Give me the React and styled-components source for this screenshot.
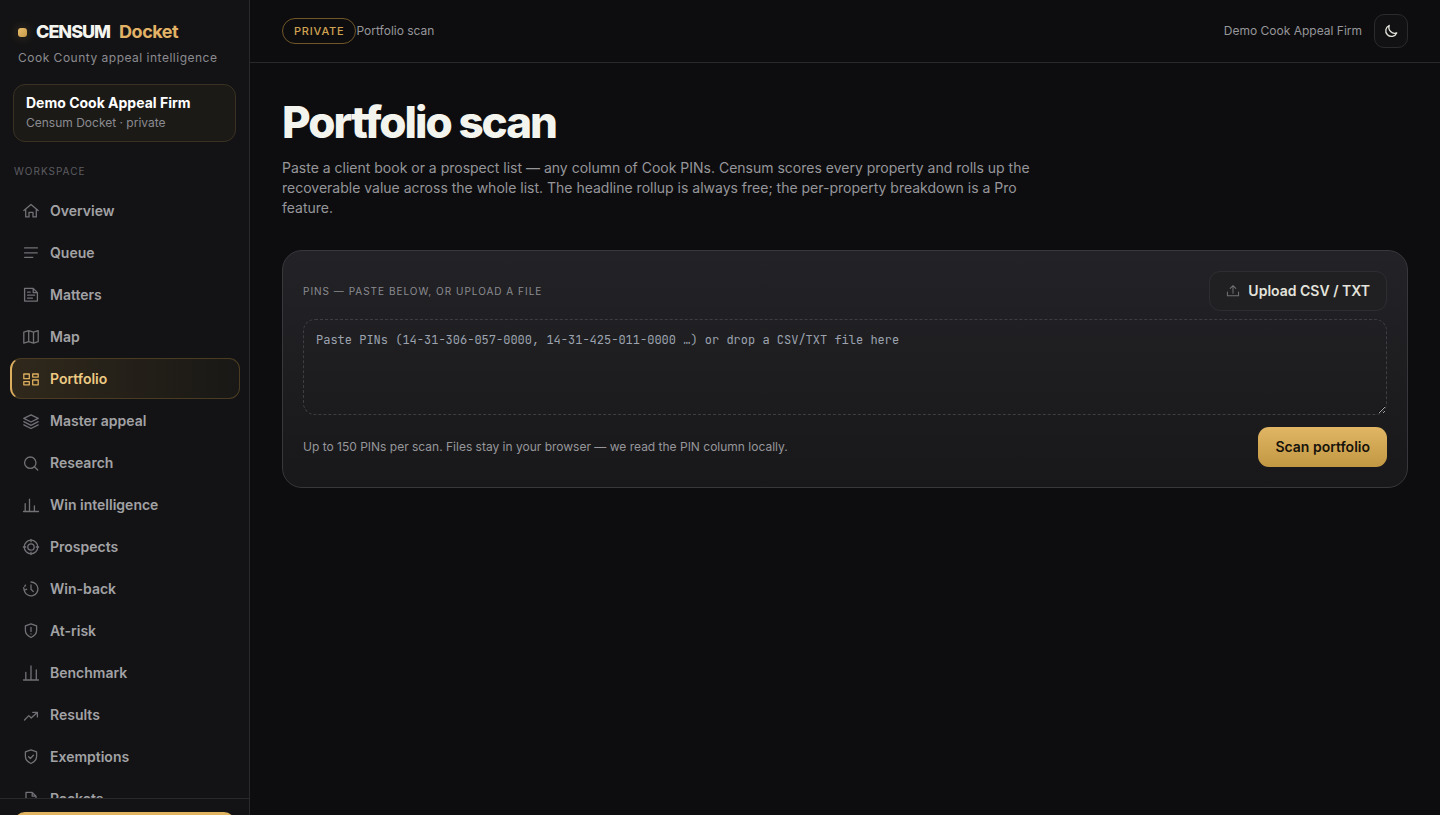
import React from 'react';
import styled, { createGlobalStyle } from 'styled-components';

const GlobalStyle = createGlobalStyle`
    * {
        box-sizing: border-box;
    }

    body {
        margin: 0;
        background: #0d0d0f;
        color: #f4f4ef;
        font-family: Inter, "Liberation Sans", sans-serif;
        font-size: 14px;
        line-height: 20px;
    }

    button, textarea {
        font-family: inherit;
        line-height: inherit;
        margin: 0;
    }
`;

const Shell = styled.div`
    display: grid;
    grid-template-columns: 250px 1fr;
    height: 100vh;
`;

const Sidebar = styled.aside`
    display: flex;
    flex-direction: column;
    min-height: 0;
    overflow: hidden;
    background: #131315;
    border-right: 1px solid #29292c;
`;

const Brand = styled.div`
    display: flex;
    align-items: center;
    padding: 20px 18px 0;
    font-size: 18px;
    line-height: 24px;
    font-weight: 800;
    letter-spacing: -1px;
`;

const BrandMark = styled.span`
    width: 9px;
    height: 9px;
    margin-right: 9px;
    border-radius: 3px;
    background: linear-gradient(135deg, #e8bd6c, #c79a48);
    box-shadow: 0 0 12px rgba(226, 178, 92, 0.3);
`;

const BrandAccent = styled.span`
    margin-left: 9px;
    font-weight: 700;
    letter-spacing: -0.5px;
    color: #e2b266;
`;

const Tagline = styled.div`
    padding: 4px 18px 0;
    font-size: 12px;
    letter-spacing: 0.5px;
    color: #8b8b90;
`;

const FirmCard = styled.div`
    margin: 16px 13px 0;
    padding: 8px 12px;
    border: 1px solid #3a3122;
    border-radius: 12px;
    background: #1b1a17;
`;

const FirmName = styled.div`
    font-weight: 650;
    color: #ffffff;
`;

const FirmMeta = styled.div`
    font-size: 12px;
    color: #8b8b90;
`;

const SectionLabel = styled.div`
    padding: 21px 14px 11px;
    font-size: 10px;
    line-height: 16px;
    letter-spacing: 1px;
    color: #5c5c61;
`;

const Nav = styled.nav`
    display: flex;
    flex: 1 1 0;
    flex-direction: column;
    gap: 1px;
    min-height: 0;
    padding: 0 9px 0 10px;
    overflow: hidden;
`;

const NavLink = styled.a`
    display: flex;
    flex: none;
    align-items: center;
    gap: 10px;
    height: 41px;
    padding: 0 11px;
    border: 1px solid ${({ $active }) => ($active ? '#4a3c22' : 'transparent')};
    border-left: ${({ $active }) => ($active ? '2px solid #dcae5e' : '2px solid transparent')};
    border-radius: 11px;
    background: ${({ $active }) => ($active ? 'linear-gradient(90deg, #30281b, #191816)' : 'none')};
    color: ${({ $active }) => ($active ? '#edca83' : '#a2a2a5')};
    font-weight: 600;
    text-decoration: none;

    svg {
        margin-left: -1px;
        color: ${({ $active }) => ($active ? '#dcae5e' : '#717176')};
    }
`;

const SidebarFooter = styled.div`
    flex: none;
    height: 17px;
    padding: 13px 14px 0;
    border-top: 1px solid #29292c;
    overflow: hidden;
`;

const FooterButton = styled.button`
    display: block;
    width: 100%;
    height: 40px;
    border: 0;
    border-radius: 11px;
    background: linear-gradient(#e2b563, #c79a48);
`;

const Main = styled.main`
    min-width: 0;
`;

const TopBar = styled.header`
    display: flex;
    align-items: center;
    justify-content: space-between;
    height: 63px;
    padding: 0 32px;
    border-bottom: 1px solid #29292c;
    font-size: 12px;
    color: #96969a;
`;

const TopGroup = styled.div`
    display: flex;
    align-items: center;
    gap: ${({ $gap }) => $gap || 0}px;
`;

const Badge = styled.span`
    padding: 0 11px;
    border: 1px solid #705628;
    border-radius: 13px;
    font-size: 11px;
    line-height: 24px;
    font-weight: 500;
    letter-spacing: 0.8px;
    color: #d0a352;
`;

const ThemeButton = styled.button`
    display: flex;
    align-items: center;
    justify-content: center;
    width: 34px;
    height: 34px;
    padding: 0;
    border: 1px solid #2b2b2e;
    border-radius: 10px;
    background: #111113;
    color: #e3e3dc;
`;

const Content = styled.div`
    padding: 32px 32px 0;
`;

const Title = styled.h1`
    margin: 0;
    font-size: 44px;
    line-height: 54px;
    font-weight: 800;
    letter-spacing: -2px;
    color: #f4f4ef;
`;

const Lead = styled.p`
    max-width: 760px;
    margin: 9px 0 32px;
    color: #96969a;
`;

const Panel = styled.section`
    padding: 20px;
    border: 1px solid #38383c;
    border-radius: 20px;
    background: linear-gradient(#232327, #18181a);
`;

const PanelRow = styled.div`
    display: flex;
    align-items: center;
    justify-content: space-between;
`;

const FieldLabel = styled.label`
    font-size: 10px;
    letter-spacing: 1px;
    color: #8b8b90;
`;

const Button = styled.button`
    display: flex;
    align-items: center;
    gap: 8px;
    height: 40px;
    padding: 0 16px;
    border: 1px solid ${({ $primary }) => ($primary ? 'transparent' : '#2e2e32')};
    border-radius: 11px;
    background: ${({ $primary }) => ($primary ? 'linear-gradient(#e0b564, #c39843)' : '#202023')};
    background-origin: border-box;
    color: ${({ $primary }) => ($primary ? '#17130b' : '#e3e3dc')};
    font-size: 14px;
    font-weight: 600;

    svg {
        color: #717176;
    }
`;

const PinsInput = styled.textarea`
    display: block;
    width: 100%;
    height: 96px;
    margin: 8px 0 12px;
    padding: 12px;
    border: 1px dashed #3e3e42;
    border-radius: 12px;
    outline: none;
    background: transparent;
    color: #f4f4ef;
    color-scheme: dark;
    font-family: "JetBrains Mono", "DejaVu Sans Mono", monospace;
    font-size: 12px;
    line-height: 16px;
    resize: vertical;

    &::placeholder {
        color: #9ca3af;
    }
`;

const Hint = styled.span`
    font-size: 12px;
    color: #96969a;
`;

const Icon = ({ size = 18, stroke = 1.3, children }) => (
    <svg
        width={size}
        height={size}
        viewBox="0 0 18 18"
        fill="none"
        stroke="currentColor"
        strokeWidth={stroke}
        strokeLinecap="round"
        strokeLinejoin="round"
        aria-hidden="true"
    >
        {children}
    </svg>
);

const SHIELD = 'M9 1.9 14.6 3.9v4.7c0 3.1-2.1 5.3-5.6 6.9-3.5-1.6-5.6-3.8-5.6-6.9V3.9z';

const items = [
    { name: 'Overview', icon: <path d="M1.9 8.6 9 2.4l7.1 6.2M3.7 7.2v7.7H7v-4.6h4v4.6h3.3V7.2" /> },
    { name: 'Queue', icon: <path d="M2.6 3.9h12.8M2.6 8.9h12.6M2.6 13.3h8.2" /> },
    {
        name: 'Matters',
        icon: <path d="M2.6 2.4h8.6l4.2 4.2v8.5H2.6zM11.2 2.4v4.2h4.2M5.6 6.2h2.6M5.6 9.2h7M5.6 12.2h4.8" />,
    },
    {
        name: 'Map',
        icon: <path d="M1.8 4.2 6.7 2.7l4.8 1.5 4.7-1.5v11l-4.7 1.5-4.8-1.5-4.9 1.5zM6.7 2.7v11M11.5 4.2v11" />,
    },
    {
        name: 'Portfolio',
        icon: <path d="M1.8 4h5.5v4.7H1.8zM10.7 4h5.5v3.1h-5.5zM1.8 11.7h5.5v3.1H1.8zM10.7 10h5.5v4.8h-5.5z" />,
    },
    {
        name: 'Master appeal',
        icon: <path d="M9 2.8 16.2 6.4 9 10 1.8 6.4zM1.8 9.7 9 13.3l7.2-3.6M1.8 12.9 9 16.5l7.2-3.6" />,
    },
    { name: 'Research', icon: <><circle cx="8.3" cy="8.7" r="5.7" /><path d="m12.4 12.8 3.3 3.2" /></> },
    { name: 'Win intelligence', icon: <path d="M1.5 15.5h15M3.2 15.5V7.7M7.5 15.5V3.1M12.4 15.5V9.8" /> },
    {
        name: 'Prospects',
        icon: (
            <>
                <circle cx="9" cy="9" r="6.8" />
                <circle cx="9" cy="9" r="3.2" />
                <path d="M9 1.4v2.4M9 14.2v2.4M1.4 9h2.4M14.2 9h2.4" />
            </>
        ),
    },
    {
        name: 'Win-back',
        icon: <path d="M9 2a6.9 6.9 0 1 1-6.4 9.4M1.7 7.6l.5 2.8 2.5-1.2M2.7 6.4l.8-1.3M9 5v4.2l2.3 2.4" />,
    },
    { name: 'At-risk', icon: <path d={`${SHIELD}M9 5.4v4M9 11.8v.1`} /> },
    { name: 'Benchmark', icon: <path d="M1.5 16h15M3.8 16V8.3M9 16V1.9M14.3 16V6" /> },
    { name: 'Results', icon: <path d="m2.5 14 4.3-4.4L9.2 12l6-5.6M10.8 6.4h4.6v4.5" /> },
    { name: 'Exemptions', icon: <path d={`${SHIELD}M6.6 8.8l1.8 1.7 3-3.3`} /> },
    { name: 'Packets', icon: <path d="M4 2.4h6.2L14 6.2v9.2H4zM10.2 2.4v3.8H14" /> },
];

const SidebarNav = ({ active }) => (
    <Nav aria-label="Workspace">
        {items.map(({ name, icon }) => (
            <NavLink key={name} href="#" $active={name === active}>
                <Icon>{icon}</Icon>
                {name}
            </NavLink>
        ))}
    </Nav>
);

const App = () => {
    return (
        <>
            <GlobalStyle />
            <Shell>
                <Sidebar>
                    <Brand>
                        <BrandMark />
                        CENSUM
                        <BrandAccent>Docket</BrandAccent>
                    </Brand>
                    <Tagline>Cook County appeal intelligence</Tagline>
                    <FirmCard>
                        <FirmName>Demo Cook Appeal Firm</FirmName>
                        <FirmMeta>Censum Docket · private</FirmMeta>
                    </FirmCard>
                    <SectionLabel>WORKSPACE</SectionLabel>
                    <SidebarNav active="Portfolio" />
                    <SidebarFooter>
                        <FooterButton type="button" aria-label="Account" />
                    </SidebarFooter>
                </Sidebar>
                <Main>
                    <TopBar>
                        <TopGroup>
                            <Badge>PRIVATE</Badge>
                            <span>Portfolio scan</span>
                        </TopGroup>
                        <TopGroup $gap={12}>
                            <span>Demo Cook Appeal Firm</span>
                            <ThemeButton type="button" aria-label="Theme">
                                <Icon size={16} stroke={1.5}>
                                    <path d="M7 2.8a6.4 6.4 0 1 0 8.4 8.4A6.6 6.6 0 0 1 7 2.8z" />
                                </Icon>
                            </ThemeButton>
                        </TopGroup>
                    </TopBar>
                    <Content>
                        <Title>Portfolio scan</Title>
                        <Lead>
                            Paste a client book or a prospect list — any column of Cook PINs. Censum scores every
                            property and rolls up the recoverable value across the whole list. The headline rollup is
                            always free; the per-property breakdown is a Pro feature.
                        </Lead>
                        <Panel>
                            <PanelRow>
                                <FieldLabel htmlFor="pins">PINS — PASTE BELOW, OR UPLOAD A FILE</FieldLabel>
                                <Button type="button">
                                    <Icon size={14}>
                                        <path d="M9 11.8V2.2M5.4 5.6 9 2.2l3.6 3.4M1.8 10.4v4.8h14.4v-4.8" />
                                    </Icon>
                                    Upload CSV / TXT
                                </Button>
                            </PanelRow>
                            <PinsInput
                                id="pins"
                                placeholder="Paste PINs (14-31-306-057-0000, 14-31-425-011-0000 …) or drop a CSV/TXT file here"
                            />
                            <PanelRow>
                                <Hint>Up to 150 PINs per scan. Files stay in your browser — we read the PIN column locally.</Hint>
                                <Button type="button" $primary>Scan portfolio</Button>
                            </PanelRow>
                        </Panel>
                    </Content>
                </Main>
            </Shell>
        </>
    );
};

export default App;
